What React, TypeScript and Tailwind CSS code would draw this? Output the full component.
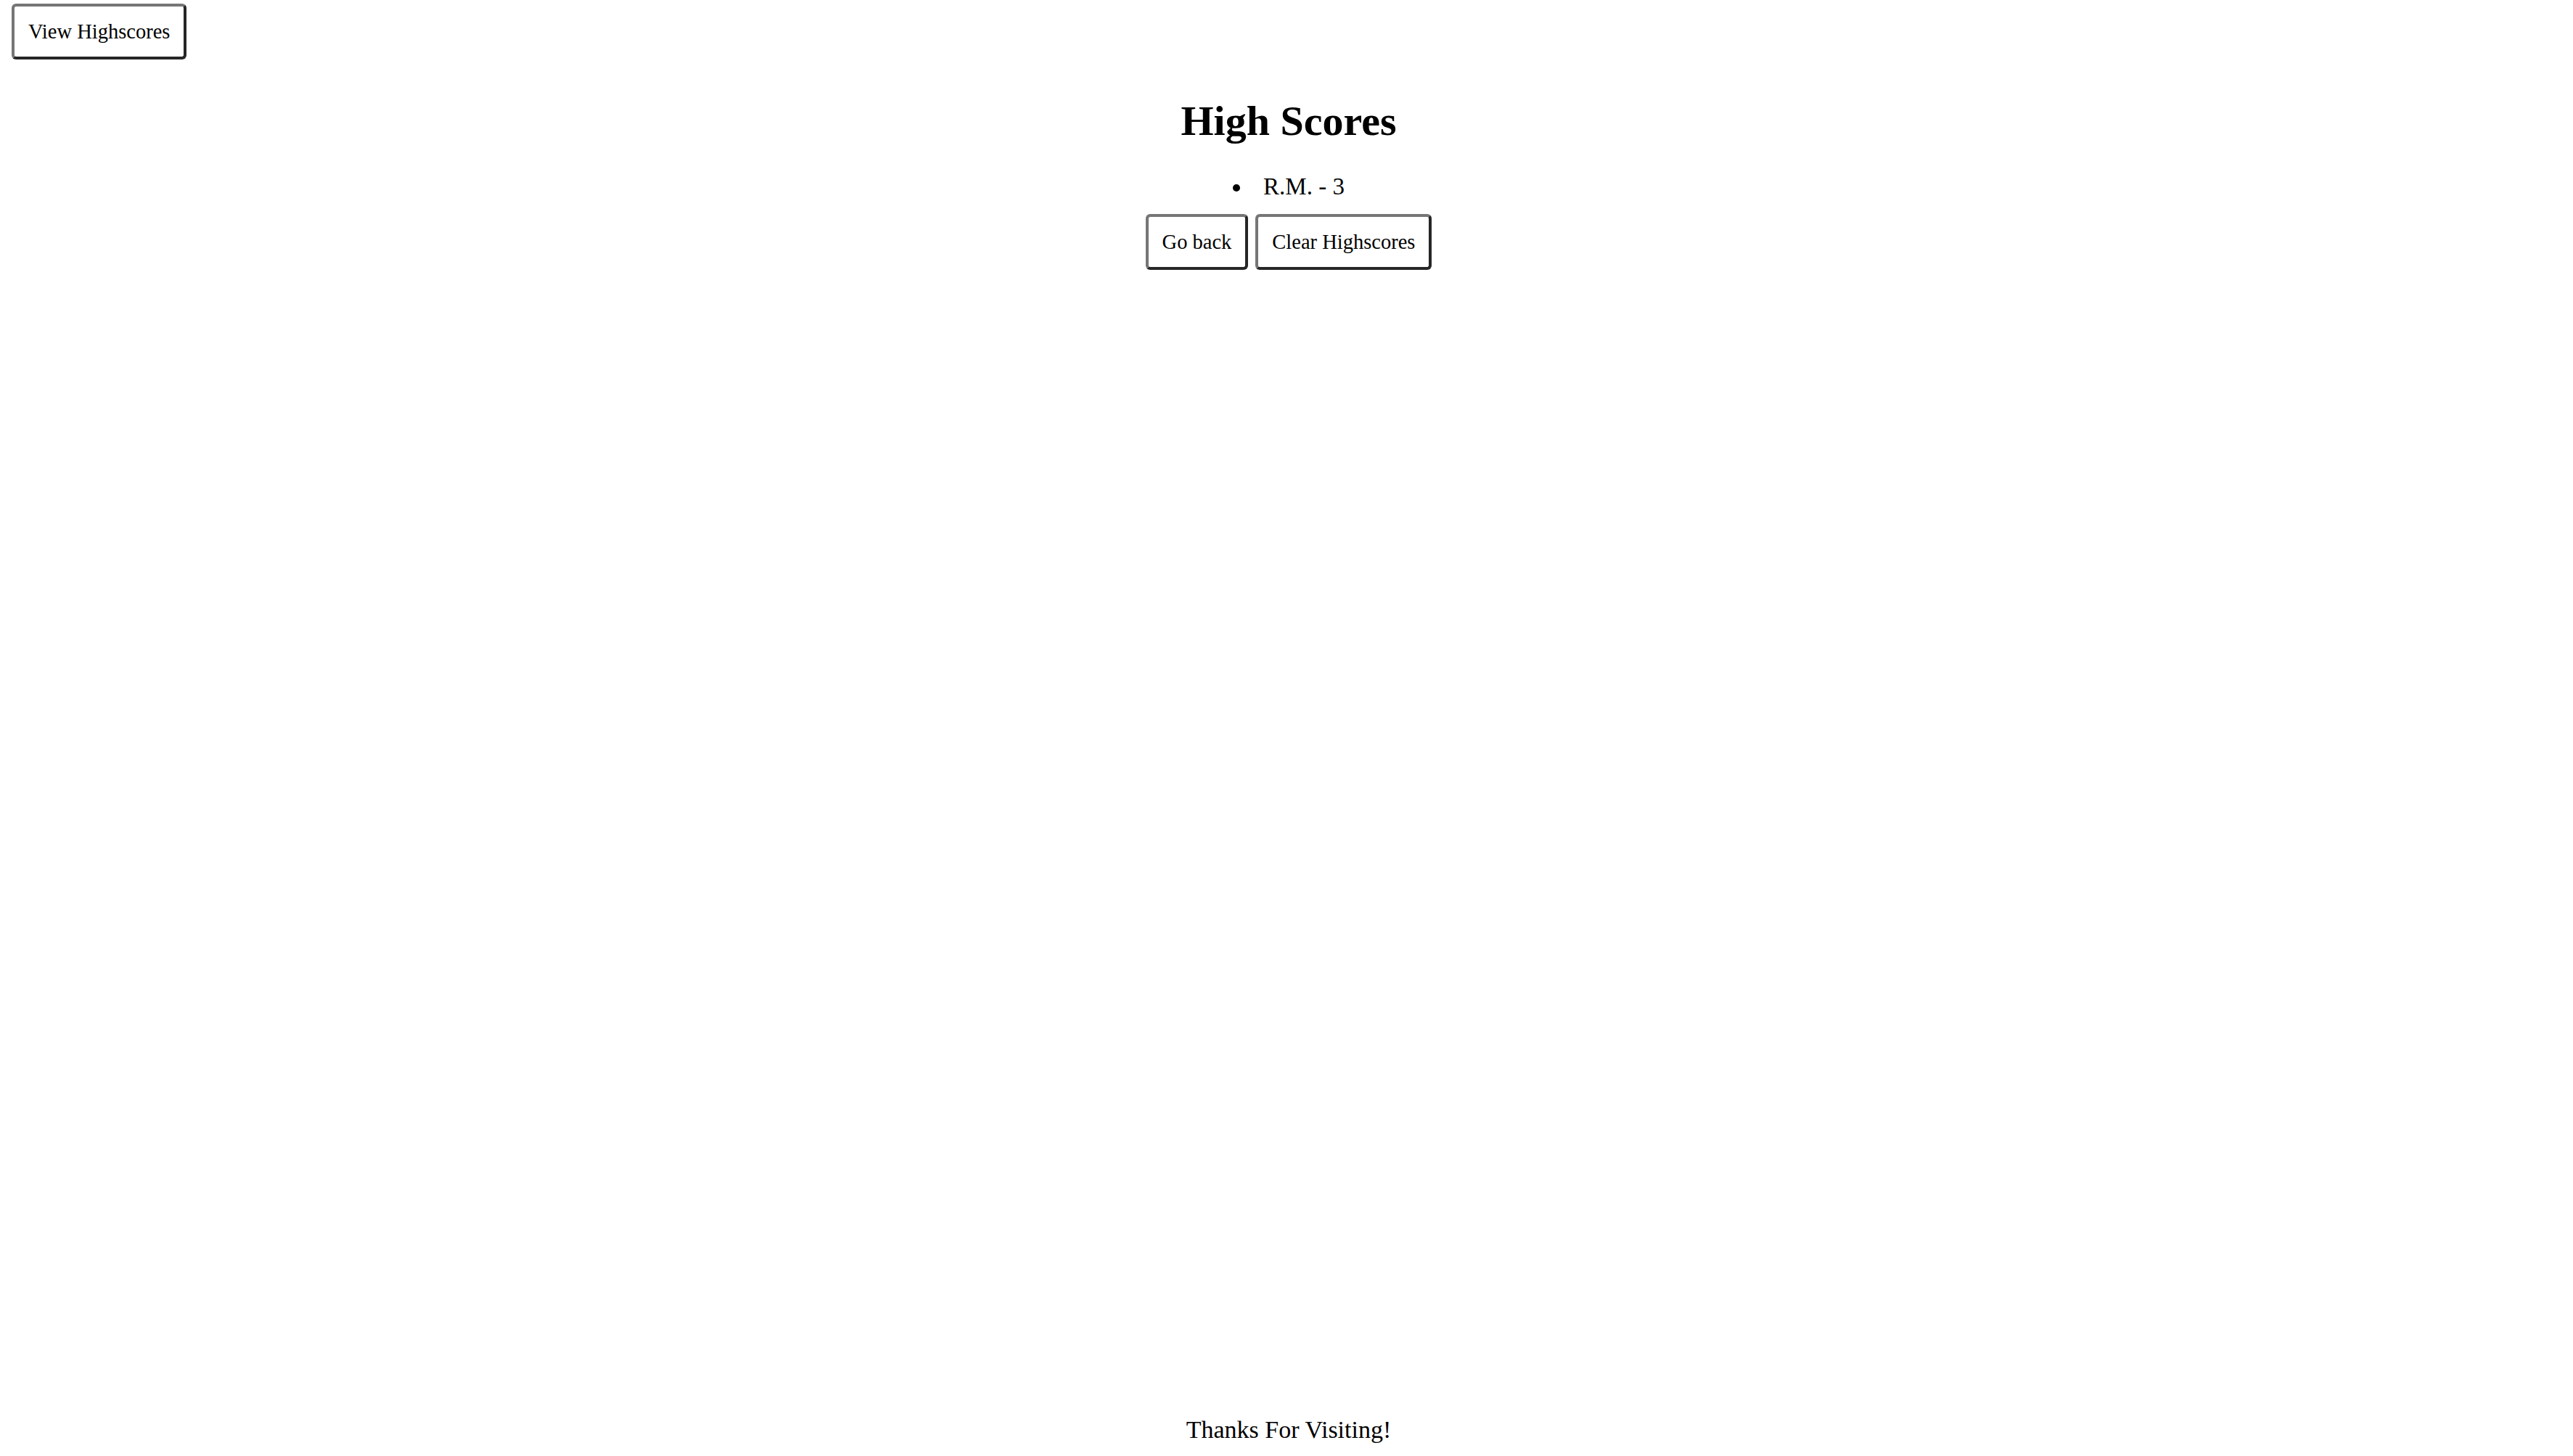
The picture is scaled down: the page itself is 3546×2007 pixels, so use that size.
const btn =
  "bg-white text-black border-4 border-t-[#767676] border-l-[#767676] border-r-[#262626] border-b-[#262626] rounded-[6px] px-[19px] py-[18px] text-[28.5px] leading-[33px]";

const App = () => {
  return (
    <div className="min-h-screen flex flex-col bg-white text-black font-['Liberation_Serif','Times_New_Roman',serif]">

      <header className="pl-[16px] pt-[5px]">
        <button className={btn}>View Highscores</button>
      </header>

      <main className="flex flex-col items-center pl-[16px] pr-[10px]">
        <h1 className="mt-[53px] text-[58px] leading-[64px] font-bold">High Scores</h1>

        <ul className="mt-[38px]">
          <li className="flex items-center gap-[32px] text-[33px] leading-[40px]">
            <span className="w-[10px] h-[10px] mt-[3px] rounded-full bg-black"></span>
            <span>R.M. - 3</span>
          </li>
        </ul>

        <div className="mt-[18px] flex gap-[10px]">
          <button className={btn}>Go back</button>
          <button className={btn}>Clear Highscores</button>
        </div>
      </main>

      <footer className="mt-auto pb-[16px] pl-[16px] pr-[10px] text-center text-[34px] leading-[40px]">
        Thanks For Visiting!
      </footer>

    </div>
  )
}

export default App;
